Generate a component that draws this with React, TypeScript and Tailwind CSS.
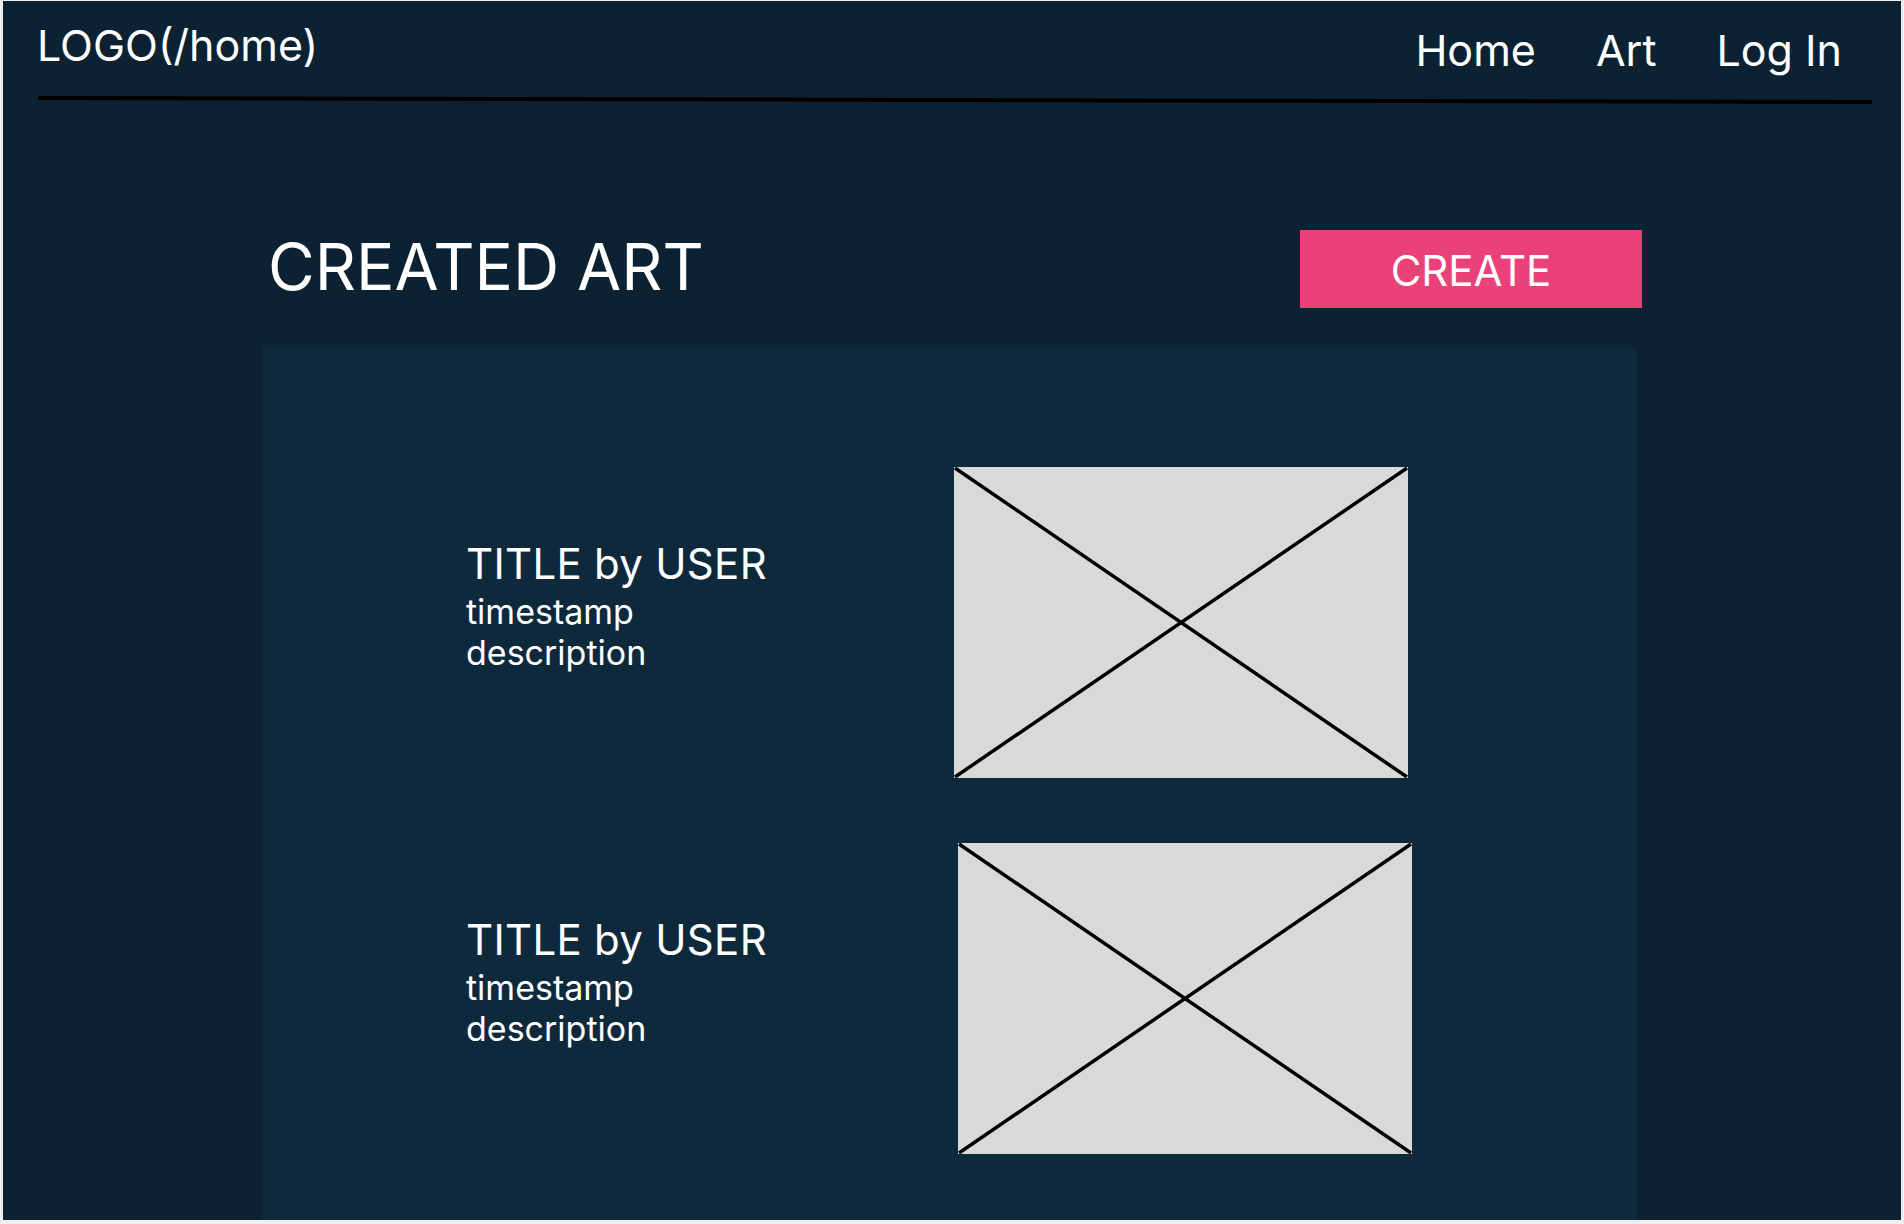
import React from "react";

const items = [
  { title: "TITLE by USER", shift: "" },
  { title: "TITLE by USER", shift: "ml-[4px]" },
];

function Placeholder({ className = "" }: { className?: string }) {
  return (
    <figure className={`w-[454px] h-[311px] bg-[#d9d9d9] shrink-0 ${className}`}>
      <svg width="454" height="311" viewBox="0 0 454 311" className="block">
        <line x1="1" y1="1" x2="453" y2="310" stroke="#000" strokeWidth="3.5" />
        <line x1="453" y1="1" x2="1" y2="310" stroke="#000" strokeWidth="3.5" />
      </svg>
    </figure>
  );
}

export default function App() {
  return (
    <div className="w-full h-[1224px] bg-[#efefef] pt-[1px] pl-[3px] font-['Inter',sans-serif] overflow-hidden">
      <div className="w-[1898px] h-[1219px] bg-[#0c2232] flex flex-col text-white">
        {/* header */}
        <header className="flex justify-between items-start pl-[34px] pr-[59px] pt-[23px] h-[95px]">
          <a className="text-[43px] leading-none">LOGO(/home)</a>
          <nav className="flex gap-[60px] text-[43px] leading-none mt-[5px]">
            <a>Home</a>
            <a>Art</a>
            <a>Log In</a>
          </nav>
        </header>
        <svg width="1834" height="8" viewBox="0 0 1834 8" className="ml-[35px] block">
          <line x1="0" y1="2" x2="1834" y2="6" stroke="#000" strokeWidth="4" />
        </svg>

        <section className="ml-[259px] w-[1375px] flex-1 flex flex-col">
          <div className="flex justify-between items-start mt-[126px]">
            <h1 className="text-[64px] leading-none mt-[5px] pl-[6px]">CREATED ART</h1>
            <button className="w-[342px] h-[78px] -mr-[5px] bg-[#ea4179] text-[42px] leading-none pt-[3px]">
              CREATE
            </button>
          </div>

          <div className="mt-[39px] flex-1 bg-[#0e293c] pt-[120px] flex flex-col gap-[65px]">
            {items.map((it, i) => (
              <article key={i} className="flex items-start pl-[204px]">
                <div className="w-[488px] mt-[73px]">
                  <h3 className="text-[42px] leading-[48px] tracking-[0.3px]">{it.title}</h3>
                  <p className="text-[34px] leading-[41px] mt-[3px]">timestamp</p>
                  <p className="text-[34px] leading-[41px]">description</p>
                </div>
                <Placeholder className={it.shift} />
              </article>
            ))}
          </div>
        </section>
      </div>
    </div>
  );
}
